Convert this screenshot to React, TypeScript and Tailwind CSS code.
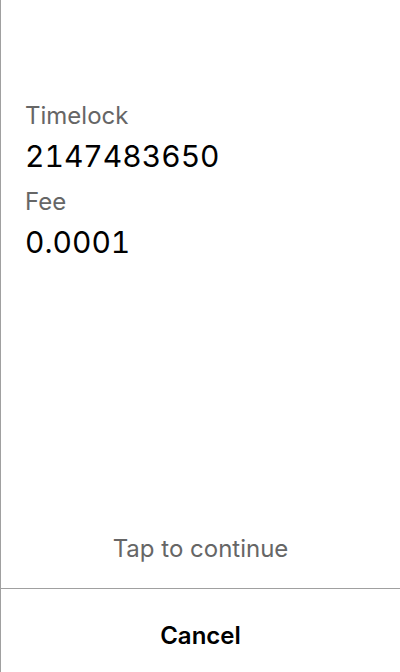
export default function App() {
  return (
    <div
      className="flex h-[672px] w-[400px] flex-col overflow-hidden border-l border-[#a0a0a0] bg-white"
      style={{ fontFamily: "Inter, 'Noto Sans', sans-serif" }}
    >
      <div className="flex flex-1 flex-col gap-[13px] px-6 pt-[101px]">
        <div className="flex flex-col">
          <div className="text-[24px] leading-[29px] text-[#666666]">Timelock</div>
          <div className="mt-[8px] text-[30px] leading-[36px] text-black tabular-nums">2147483650</div>
        </div>
        <div className="flex flex-col">
          <div className="text-[24px] leading-[29px] text-[#666666]">Fee</div>
          <div className="mt-[8px] text-[30px] leading-[36px] text-black tabular-nums">0.0001</div>
        </div>
      </div>
      <div className="pb-[25px] text-center text-[24px] leading-[29px] text-[#666666]">Tap to continue</div>
      <div className="h-[84px] shrink-0 border-t border-[#a0a0a0] pt-[32px] text-center">
        <span className="text-[24px] font-semibold leading-[29px] text-black">Cancel</span>
      </div>
    </div>
  );
}
